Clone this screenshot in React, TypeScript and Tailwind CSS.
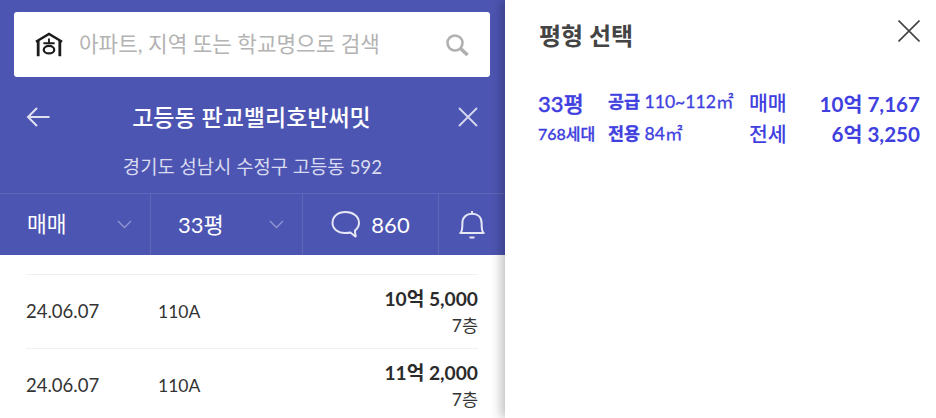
import React from "react";

const font = { fontFamily: '"Lato", "Noto Sans CJK KR", sans-serif' };

function HomeLogo() {
  return (
    <svg width="28" height="25" viewBox="0 0 30 26.8" fill="none" stroke="#1c1c1c" className="shrink-0">
      <path d="M1 10.5 L15 2 L29 10.5" strokeWidth="2.6" />
      <path d="M3.4 9 V26 M26.6 9 V26" strokeWidth="3" />
      <path d="M9 12 H21 M15 7 V12" strokeWidth="2" />
      <ellipse cx="15" cy="19" rx="5.6" ry="4" strokeWidth="2.4" />
    </svg>
  );
}

function Chevron() {
  return (
    <svg width="15" height="9" viewBox="0 0 15 9" fill="none" stroke="#8f95d0" strokeWidth="1.4">
      <path d="M1 1 L7.5 7.5 L14 1" />
    </svg>
  );
}

function Row({ date, price }: { date: string; price: string }) {
  return (
    <div className="flex h-[74px] items-center border-t border-[#f0f0f0] text-[#333]">
      <div className="w-[132px] pt-[1px] text-[18.5px]">{date}</div>
      <div className="pt-[1px] text-[17.5px]">110A</div>
      <div className="ml-auto flex flex-col items-end">
        <div className="text-[19.2px] font-bold leading-[24px] text-[#2b2b2b]">{price}</div>
        <div className="mt-[4px] text-[17.5px] leading-[22px]">7층</div>
      </div>
    </div>
  );
}

export default function App() {
  return (
    <div style={font} className="flex h-[418px] w-[936px] overflow-hidden bg-white">
      <div className="flex w-[505px] shrink-0 flex-col">
        <div className="bg-[#4d55b2]">
          <div className="pl-[14px] pr-[15px] pt-[12px]">
            <div className="flex h-[65px] items-center rounded-[3px] bg-white pl-[21px] pr-[21px]">
              <HomeLogo />
              <span className="ml-[16px] text-[21.3px] text-[#b3b3b3]">아파트, 지역 또는 학교명으로 검색</span>
              <svg width="24" height="24" viewBox="0 0 24 24" fill="none" stroke="#b0b0b0" className="ml-auto">
                <circle cx="10" cy="10" r="7.5" strokeWidth="2.6" />
                <path d="M15.5 15.5 L22.5 22" strokeWidth="3.6" />
              </svg>
            </div>
          </div>
          <div className="flex h-[80px] items-center justify-between pl-[26px] pr-[27px]">
            <svg width="24" height="20" viewBox="0 0 24 20" fill="none" stroke="#dfe1f3" strokeWidth="2">
              <path d="M23.5 10 H2 M11 1 L2 10 L11 19" />
            </svg>
            <span className="mr-[5px] text-[23px] font-medium text-white">고등동 판교밸리호반써밋</span>
            <svg width="20" height="20" viewBox="0 0 20 20" fill="none" stroke="#d5d8ef" strokeWidth="1.8">
              <path d="M1 1 L19 19 M19 1 L1 19" />
            </svg>
          </div>
          <div className="flex h-[36px] items-start justify-center text-[18.8px] leading-[20px] text-[#d9dbf0]">
            경기도 성남시 수정구 고등동 592
          </div>
          <div className="flex h-[62px] border-t border-[#5f67bb] text-white">
            <div className="flex w-[151px] items-center justify-between border-r border-[#5f67bb] pl-[27px] pr-[18px] text-[21.5px]">
              <span>매매</span>
              <Chevron />
            </div>
            <div className="flex w-[152px] items-center justify-between border-r border-[#5f67bb] pl-[27px] pr-[18px] text-[22px]">
              <span>33평</span>
              <Chevron />
            </div>
            <div className="flex w-[136px] items-center justify-center gap-[11px] border-r border-[#5f67bb] text-[22px]">
              <svg width="29" height="29" viewBox="0 0 29 29" fill="none" stroke="#e6e7f5" strokeWidth="2">
                <path d="M14.5 2 C7 2 1.5 6.5 1.5 13 C1.5 19 7 23 14 23 C16 23 18 23 19.5 22.5 L25 27 C24 25 24 22 24 20.5 C26.5 18.5 28 16 28 13 C28 6.5 22 2 14.5 2 Z" />
              </svg>
              <span>860</span>
            </div>
            <div className="flex flex-1 items-center justify-start pl-[20px]">
              <svg width="26" height="29" viewBox="0 0 26 29" fill="none" stroke="#e6e7f5" strokeWidth="2">
                <path d="M1.8 22.5 C3.4 21 3.4 19 3.4 13 C3.4 7.2 7.4 3.8 13 3.8 C18.6 3.8 22.6 7.2 22.6 13 C22.6 19 22.6 21 24.2 22.5" />
                <path d="M0.5 23 H25.5 M13 1 V4 M10.5 27.5 H15.5" />
              </svg>
            </div>
          </div>
        </div>
        <div className="flex-1 overflow-hidden pl-[26px] pr-[27px] pt-[19px]">
          <Row date="24.06.07" price="10억 5,000" />
          <Row date="24.06.07" price="11억 2,000" />
        </div>
      </div>
      <div className="relative z-10 flex-1 bg-white pl-[33px] pr-[16px] shadow-[-4px_0_10px_rgba(0,0,0,0.25)]">
        <div className="flex h-[89px] items-start justify-between pt-[21px]">
          <span className="ml-[1px] text-[24px] font-bold leading-[29px] text-[#444]">평형 선택</span>
          <svg width="22" height="22" viewBox="0 0 22 22" fill="none" stroke="#444" strokeWidth="1.6" className="mt-[-1px]">
            <path d="M0.5 0.5 L21.5 21.5 M21.5 0.5 L0.5 21.5" />
          </svg>
        </div>
        <div className="grid grid-cols-[70px_141px_60px_1fr] text-[#4040e0]">
          <div className="text-[22px] font-medium leading-[30px] [-webkit-text-stroke:0.4px_#4040e0]">33평</div>
          <div className="text-[17.6px] leading-[26px] [-webkit-text-stroke:0.3px_#4040e0]">
            <span className="text-[17.4px] font-bold">공급</span> 110~112㎡
          </div>
          <div className="text-[20.5px] font-medium leading-[28px]">매매</div>
          <div className="text-right text-[20.6px] font-bold leading-[30px]">10억 7,167</div>
          <div className="mt-[2px] text-[16px] font-medium leading-[26px] [-webkit-text-stroke:0.3px_#4040e0]">768세대</div>
          <div className="mt-[2px] text-[17.6px] leading-[26px] [-webkit-text-stroke:0.3px_#4040e0]">
            <span className="text-[17.4px] font-bold">전용</span> 84㎡
          </div>
          <div className="mt-[2px] text-[20.5px] font-medium leading-[26px]">전세</div>
          <div className="mt-[1px] text-right text-[20.6px] font-bold leading-[28px]">6억 3,250</div>
        </div>
      </div>
    </div>
  );
}
